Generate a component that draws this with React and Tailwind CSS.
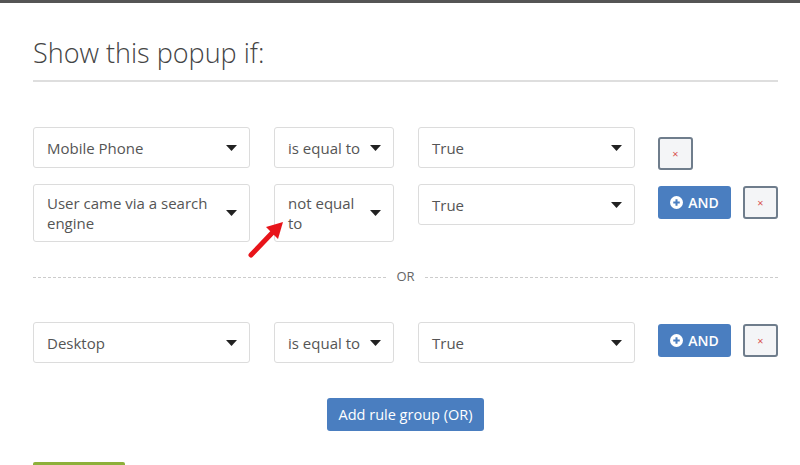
import { Fragment } from 'react'

const font = { fontFamily: '"Open Sans", "Noto Sans", Arial, sans-serif' }

function Caret() {
  return (
    <svg width="11" height="6" viewBox="0 0 11 6" className="shrink-0">
      <path d="M0 0h11L5.5 6z" fill="#222" />
    </svg>
  )
}

function Select({ label, width, tall }) {
  return (
    <div
      className={`shrink-0 flex items-center justify-between bg-white border border-[#dcdcdc] rounded-[3px] pl-[13px] pr-[12px] text-[15px] leading-[20px] text-[#555] ${tall ? 'h-[58px]' : 'h-[41px]'}`}
      style={{ width }}
    >
      <span className="pr-2">{label}</span>
      <Caret />
    </div>
  )
}

function RemoveBtn({ className = '' }) {
  return (
    <button className={`shrink-0 w-[35px] h-[33px] flex items-center justify-center bg-[#f4f5f7] border-2 border-[#6f7d8c] rounded-[3px] text-[11px] text-[#d9534f] leading-none ${className}`}>
      ×
    </button>
  )
}

function AndBtn() {
  return (
    <button className="shrink-0 h-[33px] w-[73px] flex items-center justify-center gap-[5px] bg-[#4a7ec0] rounded-[3px] text-white text-[14px] font-semibold">
      <svg width="13" height="13" viewBox="0 0 14 14">
        <circle cx="7" cy="7" r="7" fill="#fff" />
        <path d="M7 3.5v7M3.5 7h7" stroke="#4a7ec0" strokeWidth="2.2" />
      </svg>
      AND
    </button>
  )
}

const groups = [
  [
    { field: 'Mobile Phone', op: 'is equal to', value: 'True', and: false },
    { field: 'User came via a search engine', op: 'not equal to', value: 'True', and: true, tall: true },
  ],
  [{ field: 'Desktop', op: 'is equal to', value: 'True', and: true }],
]

export default function App() {
  return (
    <div className="w-[800px] h-[465px] bg-white overflow-hidden relative" style={font}>
      <div className="h-[3px] bg-[#555]" />
      <div className="pl-[33px] pr-[22px]">
        <h1 className="mt-[32px] text-[27px] font-light text-[#444] leading-[36px]">Show this popup if:</h1>
        <div className="mt-[9px] h-[2px] bg-[#dedede]" />

        <div className="mt-[45px]">
          {groups.map((rules, gi) => (
            <Fragment key={gi}>
              {gi > 0 && (
                <div className="flex items-center gap-[10px] mt-[26px] mb-[36px] h-[18px] text-[13px] text-[#666]">
                  <div className="flex-1 border-t border-dashed border-[#ccc]" />
                  <span>OR</span>
                  <div className="flex-1 border-t border-dashed border-[#ccc]" />
                </div>
              )}
              <div className="flex flex-col gap-[14px]">
                {rules.map((r, ri) => (
                  <div key={ri} className="flex items-start gap-[24px]">
                    <Select label={r.field} width={217} tall={r.tall} />
                    <Select label={r.op} width={120} tall={r.tall} />
                    <Select label={r.value} width={217} />
                    {r.and ? (
                      <div className="flex gap-[12px] mt-[2px] -ml-[1px]">
                        <AndBtn />
                        <RemoveBtn />
                      </div>
                    ) : (
                      <RemoveBtn className="mt-[10px] -ml-[1px]" />
                    )}
                  </div>
                ))}
              </div>
            </Fragment>
          ))}
        </div>

        <div className="flex justify-center mt-[35px]">
          <button className="h-[33px] px-[12px] bg-[#4a7ec0] rounded-[3px] text-white text-[14.5px]">
            Add rule group (OR)
          </button>
        </div>
      </div>

      <div className="absolute left-[33px] top-[462px] w-[92px] h-[4px] bg-[#8db03a] rounded-t-[2px]" />

      {/* annotation arrow */}
      <svg className="absolute left-[246px] top-[218px]" width="44" height="42" viewBox="0 0 44 42">
        <path d="M5 37L27 14" stroke="#e8141a" strokeWidth="5" strokeLinecap="round" />
        <path d="M37 4L20 9L32 21z" fill="#e8141a" />
      </svg>
    </div>
  )
}
